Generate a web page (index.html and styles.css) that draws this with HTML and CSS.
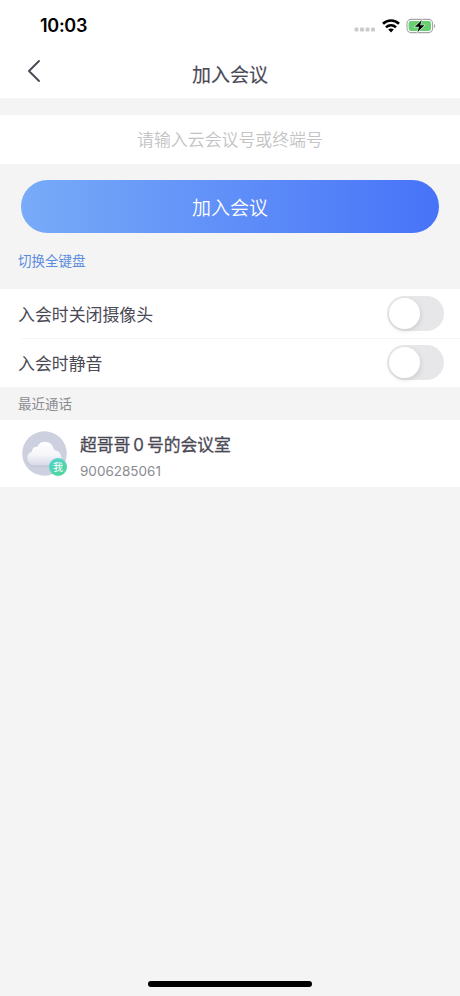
FILE: index.html
```html
<!DOCTYPE html>
<html lang="zh-CN">
<head>
<meta charset="utf-8">
<title>加入会议</title>
<link rel="stylesheet" href="styles.css">
</head>
<body>
<header class="top">
  <div class="status">
    <span class="time">10:03</span>
    <div class="indicators">
      <svg class="dots" width="22" height="5" viewBox="0 0 22 5" fill="#cbcbcd"><rect x="0.5" y="0.5" width="4" height="4" rx="1.2"/><rect x="6" y="0.5" width="4" height="4" rx="1.2"/><rect x="11.5" y="0.5" width="4" height="4" rx="1.2"/><rect x="17" y="0.5" width="4" height="4" rx="1.2"/></svg>
      <svg class="wifi" width="18" height="14" viewBox="0 0 18 14" fill="none" stroke="#000" stroke-width="2.6"><path d="M1 4.8C5.5 0.4 12.5 0.4 17 4.8"/><path d="M4 8.3C6.8 5.5 11.2 5.5 14 8.3"/><path d="M9 13.4L6.2 10.6C7.8 9.2 10.2 9.2 11.8 10.6Z" fill="#000" stroke="none"/></svg>
      <svg class="battery" width="30" height="16" viewBox="0 0 30 16"><rect x="1" y="1.4" width="25.6" height="13.2" rx="4" fill="#fff" stroke="#a5a5a7" stroke-width="1.1"/><rect x="2.6" y="3" width="22.4" height="10" rx="2.4" fill="#67cf70"/><path d="M28 6v4.2c1.6-.7 1.6-3.5 0-4.2z" fill="#a5a5a7"/><path d="M15.6 2.2L8.9 8.8H13L11.6 14L18.4 7.3H14.2Z" fill="#000" stroke="#d5f2d7" stroke-width="1.2" paint-order="stroke"/></svg>
    </div>
  </div>
  <nav class="nav">
    <svg class="back" width="14" height="24" viewBox="0 0 14 24" fill="none" stroke="#4a4955" stroke-width="1.9" stroke-linecap="round" stroke-linejoin="round"><path d="M12 2L2 12L12 22"/></svg>
    <h1 class="title">加入会议</h1>
  </nav>
</header>
<main>
  <div class="field">请输入云会议号或终端号</div>
  <button class="join">加入会议</button>
  <a class="link">切换全键盘</a>
  <section class="options">
    <div class="option"><span>入会时关闭摄像头</span><i class="switch"></i></div>
    <div class="option"><span>入会时静音</span><i class="switch"></i></div>
  </section>
  <h2 class="caption">最近通话</h2>
  <div class="call">
    <div class="avatar">
      <svg width="45" height="45" viewBox="0 0 45 45">
        <defs><linearGradient id="cloud" x1="0" y1="0" x2="0" y2="1"><stop offset="0" stop-color="#fff"/><stop offset=".55" stop-color="#f6f6fa"/><stop offset="1" stop-color="#d6d8e6"/></linearGradient></defs>
        <circle cx="22.5" cy="22.5" r="22.3" fill="#ccd0df"/>
        <path d="M12 36A6.5 6.5 0 0 1 5.3 29.5C5.3 25.7 7.6 22.8 11.3 22L31.6 19.6C36.2 20 39.3 23.5 39.3 28C39.3 32.7 36 36 31.5 36Z" fill="#bfc3d3" opacity=".7"/>
        <path d="M12 34.5A6.7 6.7 0 0 1 5.3 27.8C5.3 24 7.2 21.4 10.1 20.6C9.9 17.4 12.4 15.4 15.2 15.9C16.7 12.6 19.3 10.7 22.6 10.7C27.7 10.7 31.4 14.2 32 18.9C36.2 19.3 39.5 22.6 39.5 26.8C39.5 31.2 36 34.5 31.5 34.5Z" fill="url(#cloud)"/>
      </svg>
      <span class="badge">我</span>
    </div>
    <div class="info"><strong class="name">超哥哥<span class="digit">0</span>号的会议室</strong><span class="number">9006285061</span></div>
  </div>
</main>
<div class="home"></div>
</body>
</html>
```

FILE: styles.css
```css
* { box-sizing: border-box; }
body {
  margin: 0;
  width: 460px;
  height: 996px;
  overflow: hidden;
  display: flex;
  flex-direction: column;
  background: #f4f4f4;
  color: #4a4955;
  font-family: Inter, "Noto Sans CJK SC", sans-serif;
}
.top { height: 98px; background: #fff; }
.status {
  height: 50px;
  padding: 1px 24px 0 40px;
  display: flex;
  align-items: center;
  justify-content: space-between;
}
.time { color: #000; font-size: 18px; font-weight: 600; letter-spacing: -0.3px; }
.indicators { display: flex; align-items: center; gap: 6px; }
.dots { margin-top: 8px; }
.nav { height: 48px; display: grid; grid-template-columns: 100px 1fr 100px; }
.back { margin: 9px 0 0 27px; }
.title {
  margin: 0;
  text-align: center;
  font-size: 19px;
  line-height: 52px;
  font-weight: 400;
  -webkit-text-stroke: 0.15px #4a4955;
}
.field {
  margin-top: 16.5px;
  height: 49px;
  background: #fff;
  color: #c3c3c6;
  text-align: center;
  font-size: 16.9px;
  line-height: 50px;
  font-weight: 350;
}
.join {
  display: block;
  width: 417.5px;
  height: 53px;
  margin: 16.5px 0 0 21.3px;
  padding: 0;
  border: 0;
  border-radius: 27px;
  background: linear-gradient(90deg, #78abf8, #4773f8);
  color: #fff;
  font: 350 19px/53px "Noto Sans CJK SC", sans-serif;
}
.link {
  display: block;
  height: 56px;
  padding-left: 18px;
  color: #5c8ddd;
  font-size: 13.5px;
  line-height: 57px;
}
.options { height: 98px; background: #fff; }
.option {
  height: 49px;
  padding: 0 16px 0 18px;
  display: flex;
  align-items: center;
  justify-content: space-between;
  font-size: 16.9px;
}
.option + .option {
  background: linear-gradient(#f5f5f6, #f5f5f6) 22px 0 / 438px 1px no-repeat;
}
.switch {
  width: 57px;
  height: 35px;
  padding: 2px;
  border-radius: 18px;
  background: #e7e7e9;
}
.switch::before {
  content: "";
  display: block;
  width: 31px;
  height: 31px;
  border-radius: 50%;
  background: #fff;
  box-shadow: 1px 2px 5px rgba(0, 0, 0, 0.11);
}
.caption {
  margin: 0;
  height: 33px;
  padding-left: 18px;
  color: #8b8b91;
  font-size: 13.5px;
  line-height: 35px;
  font-weight: 400;
}
.call {
  height: 67px;
  padding: 11px 22px;
  display: flex;
  gap: 13px;
  background: #fff;
}
.avatar { position: relative; width: 45px; height: 45px; }
.badge {
  position: absolute;
  left: 27px;
  top: 27px;
  width: 18px;
  height: 18px;
  border-radius: 50%;
  background: linear-gradient(150deg, #55d2d2, #4fd694);
  color: #fff;
  font-size: 10px;
  line-height: 18px;
  text-align: center;
  font-weight: 400;
}
.info { display: flex; flex-direction: column; }
.name {
  font-size: 16.8px;
  line-height: 29px;
  font-weight: 400;
  white-space: nowrap;
  -webkit-text-stroke: 0.3px #4a4955;
}
.digit { margin: 0 3px; }
.number {
  margin-top: 1px;
  color: #8b8b91;
  font-size: 13.5px;
  line-height: 20px;
}
.home {
  width: 164px;
  height: 6px;
  margin: auto auto 9px 148px;
  border-radius: 3px;
  background: #000;
}
```
